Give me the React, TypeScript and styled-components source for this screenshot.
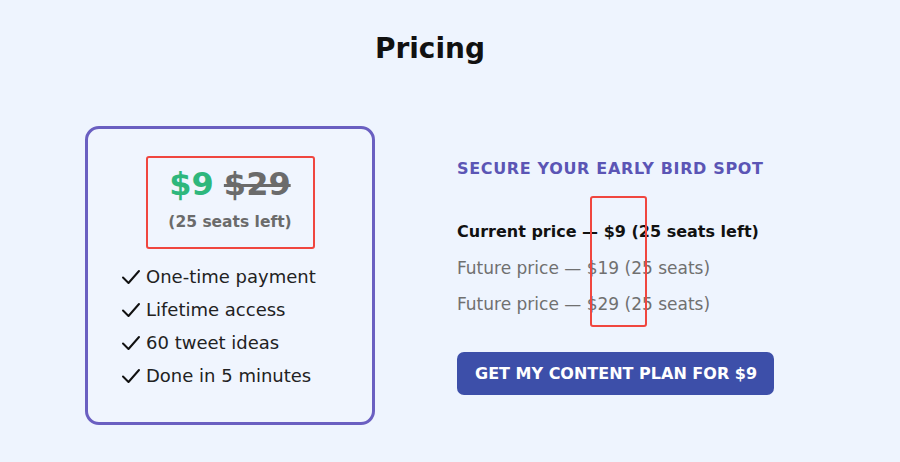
import * as React from "react";
import styled, { createGlobalStyle } from "styled-components";

const GlobalStyle = createGlobalStyle`
  html, body {
    margin: 0;
    padding: 0;
    background: #eef4fe;
    font-family: "DejaVu Sans", "Noto Sans", sans-serif;
  }
`;

const Page = styled.div`
  width: 900px;
  height: 462px;
  position: relative;
  overflow: hidden;
`;

const Title = styled.h1`
  margin: 0;
  padding: 32px 40px 0 0;
  text-align: center;
  font-size: 28px;
  font-weight: 700;
  color: #111;
  line-height: 34px;
`;

const Row = styled.div`
  display: flex;
  align-items: center;
  padding-left: 85px;
  margin-top: 60px;
  gap: 82px;
`;

const Card = styled.div`
  box-sizing: border-box;
  width: 290px;
  height: 299px;
  border: 3px solid #6a5fc1;
  border-radius: 14px;
  background: #f0f5fe;
  display: flex;
  flex-direction: column;
  align-items: center;
  padding-top: 35px;
`;

const PriceLine = styled.div`
  display: flex;
  gap: 10px;
  font-size: 32px;
  font-weight: 700;
  line-height: 40px;
`;

const Price = styled.span<{ $old?: boolean }>`
  color: ${(p) => (p.$old ? "#6b6b6b" : "#2eb77c")};
  text-decoration: ${(p) => (p.$old ? "line-through" : "none")};
  text-decoration-thickness: 3px;
`;

const Seats = styled.div`
  margin-top: 9px;
  font-size: 15.5px;
  font-weight: 700;
  color: #6b6b6b;
`;

const List = styled.ul`
  list-style: none;
  margin: 35px 0 0 0;
  padding: 0 0 0 33px;
  align-self: stretch;
  display: flex;
  flex-direction: column;
  gap: 11px;
`;

const Item = styled.li`
  display: flex;
  align-items: center;
  gap: 5px;
  font-size: 18px;
  line-height: 22px;
  color: #222;
`;

const Side = styled.div`
  display: flex;
  flex-direction: column;
  align-items: flex-start;
  padding-top: 2px;
`;

const Kicker = styled.h2`
  margin: 0;
  font-size: 16px;
  font-weight: 700;
  color: #5b55b5;
  letter-spacing: 0.65px;
`;

const Tier = styled.p<{ $current?: boolean }>`
  margin: 0;
  margin-top: ${(p) => (p.$current ? "43px" : "14px")};
  font-size: ${(p) => (p.$current ? "16px" : "17px")};
  line-height: 22px;
  font-weight: ${(p) => (p.$current ? 700 : 400)};
  color: ${(p) => (p.$current ? "#111" : "#707070")};
`;

const Button = styled.button`
  margin-top: 37px;
  height: 43px;
  padding: 0 17px 0 18px;
  border: none;
  border-radius: 7px;
  background: #3d4fa9;
  color: #fff;
  font-family: inherit;
  font-size: 16px;
  font-weight: 700;
  cursor: pointer;
`;

const Mark = styled.div<{ $x: number; $y: number; $w: number; $h: number }>`
  position: absolute;
  left: ${(p) => p.$x}px;
  top: ${(p) => p.$y}px;
  width: ${(p) => p.$w}px;
  height: ${(p) => p.$h}px;
  box-sizing: border-box;
  border: 2px solid #f0463f;
  border-radius: 3px;
  pointer-events: none;
`;

const Check = () => (
  <svg width="20" height="18" viewBox="0 0 20 18" fill="none">
    <path d="M2 9.5 L7.5 15 L18 3" stroke="#111" strokeWidth="2" strokeLinecap="round" strokeLinejoin="round" />
  </svg>
);

const perks = ["One-time payment", "Lifetime access", "60 tweet ideas", "Done in 5 minutes"];

export default function App() {
  return (
    <Page>
      <GlobalStyle />
      <Title>Pricing</Title>
      <Row>
        <Card>
          <PriceLine>
            <Price>$9</Price>
            <Price $old>$29</Price>
          </PriceLine>
          <Seats>(25 seats left)</Seats>
          <List>
            {perks.map((p) => (
              <Item key={p}>
                <Check />
                {p}
              </Item>
            ))}
          </List>
        </Card>
        <Side>
          <Kicker>SECURE YOUR EARLY BIRD SPOT</Kicker>
          <Tier $current>Current price — $9 (25 seats left)</Tier>
          <Tier>Future price — $19 (25 seats)</Tier>
          <Tier>Future price — $29 (25 seats)</Tier>
          <Button>GET MY CONTENT PLAN FOR $9</Button>
        </Side>
      </Row>
      <Mark $x={146} $y={156} $w={169} $h={93} />
      <Mark $x={590} $y={196} $w={57} $h={131} />
    </Page>
  );
}
